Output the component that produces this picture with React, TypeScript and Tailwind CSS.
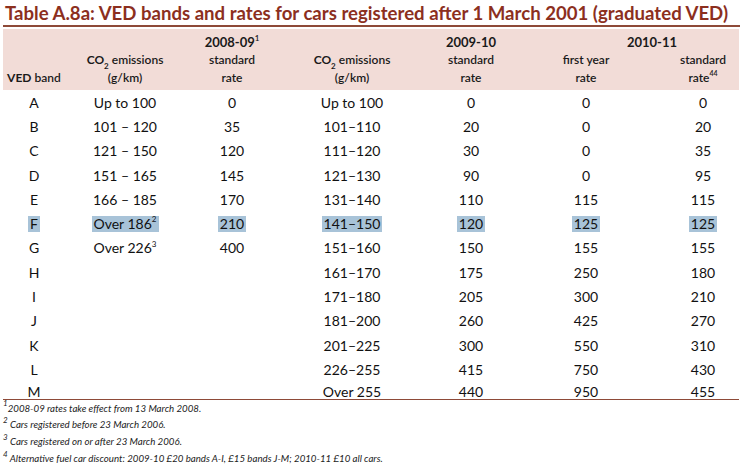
import React from "react";

const COLS = [
  "w-[62px]",
  "w-[120px]",
  "w-[94px]",
  "ml-[18px] w-[110px]",
  "ml-[24px] w-[80px]",
  "ml-[35px] w-[80px]",
  "ml-[42px] w-[70px]",
];

const sup = (s: string) => (
  <sup className="text-[8px] relative top-[-1px] align-super leading-none">{s}</sup>
);

const rows: React.ReactNode[][] = [
  ["A", "Up to 100", "0", "Up to 100", "0", "0", "0"],
  ["B", "101 – 120", "35", "101–110", "20", "0", "20"],
  ["C", "121 – 150", "120", "111–120", "30", "0", "35"],
  ["D", "151 – 165", "145", "121–130", "90", "0", "95"],
  ["E", "166 – 185", "170", "131–140", "110", "115", "115"],
  ["F", <>Over 186{sup("2")}</>, "210", "141–150", "120", "125", "125"],
  ["G", <>Over 226{sup("3")}</>, "400", "151–160", "150", "155", "155"],
  ["H", "", "", "161–170", "175", "250", "180"],
  ["I", "", "", "171–180", "205", "300", "210"],
  ["J", "", "", "181–200", "260", "425", "270"],
  ["K", "", "", "201–225", "300", "550", "310"],
  ["L", "", "", "226–255", "415", "750", "430"],
  ["M", "", "", "Over 255", "440", "950", "455"],
];

function HLine({ children }: { children?: React.ReactNode }) {
  return <div className="h-[18px] leading-[18px] whitespace-nowrap">{children}</div>;
}

export default function App() {
  return (
    <div
      className="w-[741px] h-[464px] bg-white overflow-hidden text-[#111]"
      style={{ fontFamily: "Lato, 'Open Sans', sans-serif" }}
    >
      <div className="pl-[5px] pt-[1px] h-[25px] text-[18.6px] leading-[24px] font-bold text-[#8c2f1e] whitespace-nowrap">
        Table A.8a: VED bands and rates for cars registered after 1 March 2001 (graduated VED)
      </div>
      <div className="ml-[3px] w-[737px] h-[2px] bg-[#8e4a38]" />
      <div className="ml-[3px] w-[736px] mt-[2px] bg-[#f2dcd7] pt-[4px] pb-[3px] h-[61px] flex text-[12px] text-center text-[#1a1a1a]">
        <div className={COLS[0]}>
          <HLine />
          <HLine />
          <HLine>
            <span className="font-bold">VED</span> <span className="font-semibold">band</span>
          </HLine>
        </div>
        <div className={COLS[1]}>
          <HLine />
          <HLine>
            <span className="font-bold">
              CO<sub className="text-[8px] align-sub leading-none">2</sub>
            </span>{" "}
            <span className="font-semibold">emissions</span>
          </HLine>
          <HLine>
            <span className="font-semibold">(g/km)</span>
          </HLine>
        </div>
        <div className={`${COLS[2]} font-semibold`}>
          <HLine>
            <span className="font-bold text-[13px]">2008-09</span>
            {sup("1")}
          </HLine>
          <HLine>standard</HLine>
          <HLine>rate</HLine>
        </div>
        <div className={COLS[3]}>
          <HLine />
          <HLine>
            <span className="font-bold">
              CO<sub className="text-[8px] align-sub leading-none">2</sub>
            </span>{" "}
            <span className="font-semibold">emissions</span>
          </HLine>
          <HLine>
            <span className="font-semibold">(g/km)</span>
          </HLine>
        </div>
        <div className={`${COLS[4]} font-semibold`}>
          <HLine>
            <span className="font-bold text-[13px]">2009-10</span>
          </HLine>
          <HLine>standard</HLine>
          <HLine>rate</HLine>
        </div>
        <div className="ml-[35px] w-[192px] font-semibold">
          <HLine>
            <div className="pl-[20px]">
              <span className="font-bold text-[13px]">2010-11</span>
            </div>
          </HLine>
          <div className="flex">
            <div className="w-[80px]">
              <HLine>first year</HLine>
              <HLine>rate</HLine>
            </div>
            <div className="ml-[42px] w-[70px]">
              <HLine>standard</HLine>
              <HLine>
                rate<sup className="text-[7px] relative top-[-1px] align-super leading-none">44</sup>
              </HLine>
            </div>
          </div>
        </div>
      </div>
      <div className="ml-[3px] w-[736px] text-[14px]">
        {rows.map((r, i) => {
          const last = i === rows.length - 1;
          return (
            <div
              key={i}
              className={last ? "flex items-start h-[17px]" : "flex items-center h-[24.3px]"}
            >
              {r.map((c, j) => (
                <div
                  key={j}
                  className={`${COLS[j]} text-center whitespace-nowrap ${last ? "leading-[24px] -mt-[2px]" : ""}`}
                >
                  {i === 5 && c !== "" ? (
                    <span className="bg-[#a8c3d8] px-[2px] inline-block leading-[16px]">{c}</span>
                  ) : (
                    c
                  )}
                </div>
              ))}
            </div>
          );
        })}
      </div>
      <div className="ml-[3px] w-[736px] h-px bg-[#8e4a38]" />
      <div className="pl-[3px] text-[9.7px] italic text-[#222] leading-[16.8px]">
        <div>{sup("1")}2008-09 rates take effect from 13 March 2008.</div>
        <div>{sup("2")} Cars registered before 23 March 2006.</div>
        <div>{sup("3")} Cars registered on or after 23 March 2006.</div>
        <div>
          {sup("4")} Alternative fuel car discount: 2009-10 £20 bands A-I, £15 bands J-M; 2010-11 £10 all cars.
        </div>
      </div>
    </div>
  );
}
